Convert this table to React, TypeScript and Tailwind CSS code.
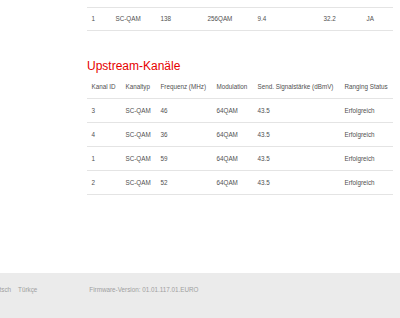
import React from "react";

type Row = string[];

const downRow: Row = ["1", "SC-QAM", "138", "256QAM", "9.4", "32.2", "JA"];

const upHead: Row = [
  "Kanal ID",
  "Kanaltyp",
  "Frequenz (MHz)",
  "Modulation",
  "Send. Signalstärke (dBmV)",
  "Ranging Status",
];

const upRows: Row[] = [
  ["3", "SC-QAM", "46", "64QAM", "43.5", "Erfolgreich"],
  ["4", "SC-QAM", "36", "64QAM", "43.5", "Erfolgreich"],
  ["1", "SC-QAM", "59", "64QAM", "43.5", "Erfolgreich"],
  ["2", "SC-QAM", "52", "64QAM", "43.5", "Erfolgreich"],
];

const downCols = "grid-cols-[24px_45px_47px_50px_66px_43px_1fr]";
const upCols = "grid-cols-[34px_35px_56px_41px_87px_1fr]";

function Cells({ row }: { row: Row }) {
  return (
    <>
      {row.map((c, i) => (
        <span key={i} className="pl-[4.5px] whitespace-nowrap">
          {c}
        </span>
      ))}
    </>
  );
}

export default function App() {
  return (
    <div
      className="w-[400px] h-[318px] overflow-hidden bg-white flex flex-col text-[6.3px] text-[#505050]"
      style={{ fontFamily: '"Liberation Sans", Arial, sans-serif' }}
    >
      <div className="pl-[87px] pr-[7px]">
        {/* tail of the downstream table */}
        <div className="pt-[7px]">
          <div
            className={`grid ${downCols} items-center h-[24px] border-y border-[#e4e4e4]`}
          >
            <Cells row={downRow} />
          </div>
        </div>

        <h2 className="mt-[28px] text-[12px] leading-[14px] text-[#e60000]">
          Upstream-Kanäle
        </h2>

        <div className="mt-[2px]">
          <div
            className={`grid ${upCols} items-center h-[24px] border-b border-[#e4e4e4]`}
          >
            <Cells row={upHead} />
          </div>
          {upRows.map((r, i) => (
            <div
              key={i}
              className={`grid ${upCols} items-center h-[24px] border-b border-[#e4e4e4]`}
            >
              <Cells row={r} />
            </div>
          ))}
        </div>
      </div>

      <div className="flex-1" />

      <footer className="h-[45px] bg-[#ebebeb] flex items-start pt-[12px] text-[#a0a0a0]">
        <div className="flex gap-[7px] -ml-[12px]">
          <span>Deutsch</span>
          <span>Türkçe</span>
        </div>
        <span className="ml-[52px]">Firmware-Version: 01.01.117.01.EURO</span>
      </footer>
    </div>
  );
}
